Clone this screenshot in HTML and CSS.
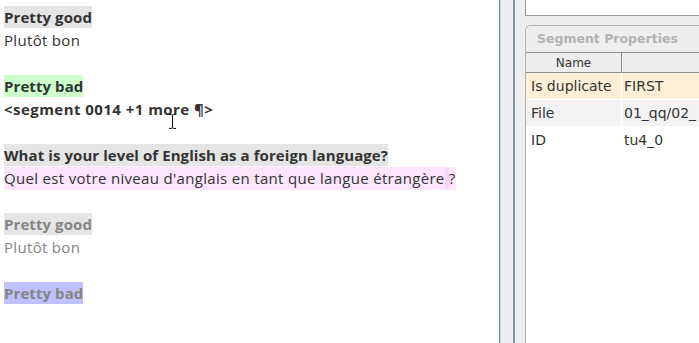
FILE: index.html
```html
<!DOCTYPE html>
<html>
<head>
<meta charset="utf-8">
<link rel="stylesheet" href="styles.css">
</head>
<body>
<div class="app">
  <main class="editor">
    <div class="line"><span class="hl-gray b">Pretty good</span></div>
    <div class="line">Plutôt bon</div>
    <div class="line"></div>
    <div class="line"><span class="hl-green b">Pretty bad</span></div>
    <div class="line b wide">&lt;segment 0014 +1 more ¶&gt;</div>
    <div class="line"></div>
    <div class="line"><span class="hl-gray b">What is your level of English as a foreign language?</span></div>
    <div class="line"><span class="hl-pink">Quel est votre niveau d'anglais en tant que langue étrangère<span class="nbsp">&nbsp;</span>?</span></div>
    <div class="line"></div>
    <div class="line dim"><span class="hl-gray b">Pretty good</span></div>
    <div class="line dim">Plutôt bon</div>
    <div class="line"></div>
    <div class="line dim"><span class="hl-blue b">Pretty bad</span></div>
    <svg class="ibeam" width="9" height="15" viewBox="0 0 9 15"><path d="M1 0.5h2.5M5.5 0.5H8M4.5 1.5v12M1 14.5h2.5M5.5 14.5H8" stroke="#111" stroke-width="1" fill="none"/><path d="M3.5 1h2M3.5 14h2" stroke="#111" stroke-width="1"/></svg>
  </main>
  <div class="splitter">
    <div class="split-a"></div>
    <div class="split-b"></div>
  </div>
  <aside class="side">
    <div class="topbox"></div>
    <section class="props">
      <div class="props-title">Segment Properties</div>
      <table class="ptable">
        <thead>
          <tr><th class="c1">Name</th><th class="c2"></th></tr>
        </thead>
        <tbody>
          <tr class="r-dup"><td class="c1">Is duplicate</td><td class="c2">FIRST</td></tr>
          <tr class="r-alt"><td class="c1">File</td><td class="c2">01_qq/02_</td></tr>
          <tr><td class="c1">ID</td><td class="c2">tu4_0</td></tr>
        </tbody>
      </table>
    </section>
  </aside>
</div>
</body>
</html>
```

FILE: styles.css
```css
html, body {
  margin: 0;
  padding: 0;
  width: 699px;
  height: 343px;
  overflow: hidden;
  background: #fff;
}
.app {
  display: flex;
  height: 343px;
}
.editor {
  position: relative;
  width: 499px;
  flex: none;
  padding: 6px 0 0 4px;
  box-sizing: border-box;
  font-family: "Open Sans", sans-serif;
  font-size: 15px;
  letter-spacing: 0.32px;
  color: #333;
  background: #fff;
}
.line {
  height: 23px;
  line-height: 23px;
  white-space: nowrap;
}
.b { font-weight: 700; letter-spacing: 0.08px; }
.wide { letter-spacing: 0.45px; }
.dim { color: #858585; }
.hl-gray { background: #e5e5e5; display: inline-block; height: 22px; }
.hl-green { background: #ccffcc; display: inline-block; height: 22px; }
.hl-blue { background: #c0c0ff; display: inline-block; height: 22px; }
.hl-pink { background: #fde6fd; display: inline-block; height: 23px; }
.nbsp { background: #f5d8f5; }
.ibeam {
  position: absolute;
  left: 168px;
  top: 114px;
}
.splitter {
  flex: none;
  width: 26px;
  display: flex;
  background: #eeeeee;
  box-sizing: border-box;
  border-left: 1px solid #7d8a98;
}
.split-a {
  width: 1px;
  background: #b8d0e8;
}
.split-b {
  width: 12px;
  border-right: 2px solid #8796a6;
  box-sizing: content-box;
}
.side {
  flex: 1;
  background: #eeeeee;
  font-family: "DejaVu Sans", sans-serif;
  display: flex;
  flex-direction: column;
}
.topbox {
  height: 15px;
  background: #fff;
  border-left: 1px solid #9a9a9a;
  border-bottom: 1px solid #9a9a9a;
  margin-bottom: 9px;
}
.props {
  flex: 1;
  border-left: 1px solid #b0b0b0;
  border-top: 1px solid #b0b0b0;
  border-top-left-radius: 6px;
  background: #fff;
  display: flex;
  flex-direction: column;
}
.props-title {
  height: 26px;
  line-height: 25px;
  background: #eeeeee;
  border-top-left-radius: 6px;
  padding-left: 11px;
  font-size: 12.5px;
  font-weight: 700;
  color: #b3b3b3;
}
.ptable {
  border-collapse: collapse;
  width: 100%;
  table-layout: fixed;
  font-size: 14px;
  color: #333;
}
.ptable th {
  height: 19px;
  padding: 0;
  font-weight: 400;
  font-size: 12px;
  background: #eeeeee;
  border-top: 1px solid #8e8e8e;
  border-bottom: 1px solid #8e8e8e;
  text-align: center;
  color: #333;
}
.ptable .c1 { width: 95px; border-right: 1px solid #8e8e8e; }
.ptable td.c1 { border-right: 1px solid #fff; padding-left: 5px; }
.ptable td {
  height: 26px;
  padding: 0;
  white-space: nowrap;
  overflow: hidden;
}
.ptable td.c2 { padding-left: 2px; }
.ptable tbody tr { border-bottom: 1px solid #fff; }
.r-dup td { background: #feefd6; }
.r-alt td { background: #f3f3f3; }
```
